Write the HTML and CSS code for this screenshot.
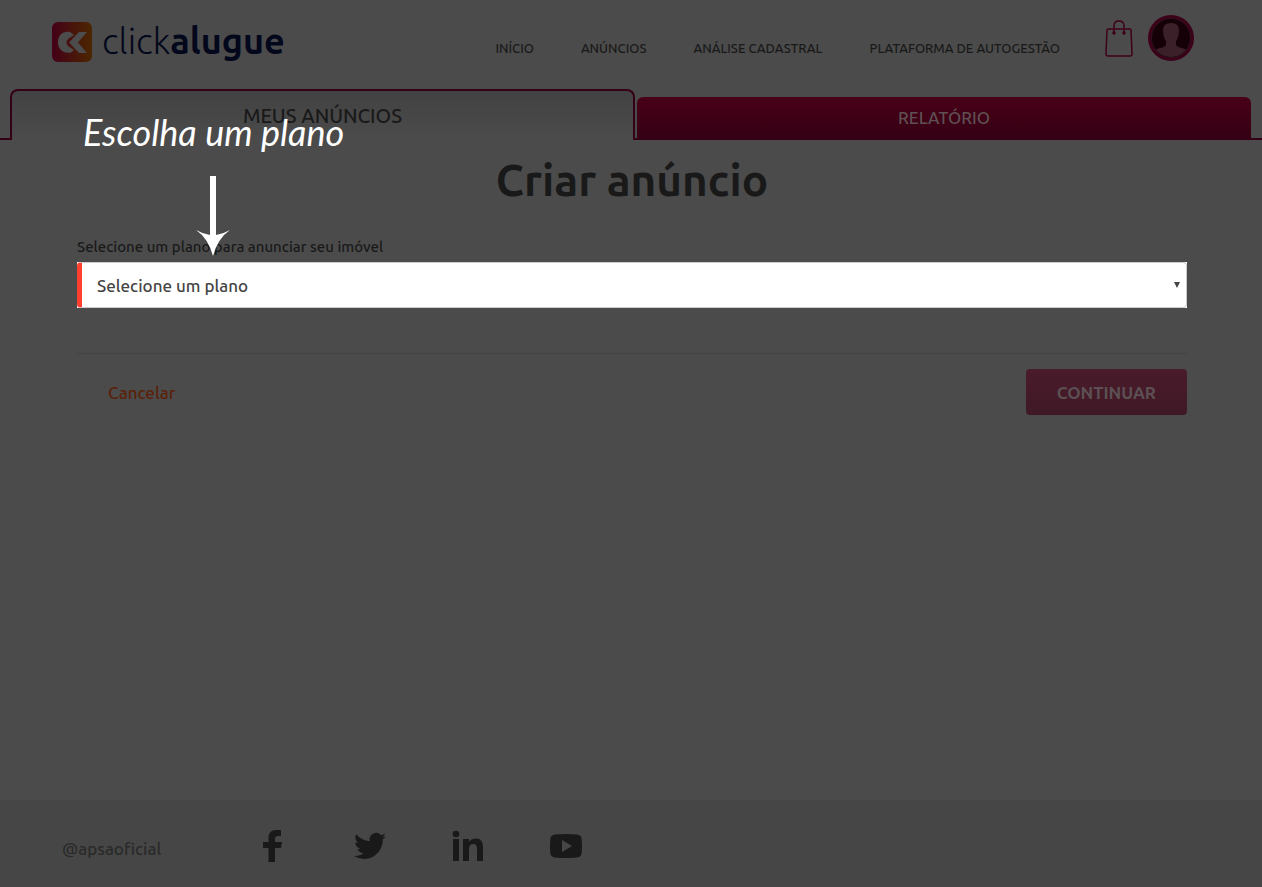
FILE: index.html
```html
<!DOCTYPE html>
<html lang="pt-BR">
<head>
<meta charset="utf-8">
<meta name="viewport" content="width=device-width, initial-scale=1">
<title>Criar anúncio - clickalugue</title>
<link rel="stylesheet" href="styles.css">
</head>
<body>
<header class="header">
  <a class="brand" href="#">
    <svg class="brand-mark" viewBox="0 0 40 40" aria-hidden="true">
      <defs><linearGradient id="mark" x1="0" x2="1" y1="0" y2="0"><stop offset="0" stop-color="#440018"/><stop offset="1" stop-color="#4c2600"/></linearGradient></defs>
      <rect width="40" height="40" rx="6" fill="url(#mark)"/>
      <path d="M18 10C10 9 6 14 6 20.500S11 32 19 30.500L22 28L16 24Q13 20.500 16 17L22 13Z" fill="#4c4c4c"/>
      <path d="M27 10H35L26 20.500L35 31H27L17 20.500Z" fill="#4c4c4c"/>
    </svg>
    <span class="brand-name">click<strong>alugue</strong></span>
  </a>
  <nav class="nav">
    <a href="#">INÍCIO</a>
    <a href="#">ANÚNCIOS</a>
    <a href="#">ANÁLISE CADASTRAL</a>
    <a href="#">PLATAFORMA DE AUTOGESTÃO</a>
  </nav>
  <div class="account">
    <button class="icon-button" type="button" aria-label="Sacola">
      <svg width="28" height="38" viewBox="0 0 28 38" fill="none" stroke="#3f001a" stroke-width="1.500">
        <path d="M3 10H25Q26 10 26 11L27 35Q27 37 25 37H3Q1 37 1 35L2 11Q2 10 3 10Z"/>
        <path d="M9 14V7Q9 2 14 2T19 7V14"/>
        <circle cx="9" cy="14" r="1" fill="#3f001a"/><circle cx="19" cy="14" r="1" fill="#3f001a"/>
      </svg>
    </button>
    <button class="icon-button" type="button" aria-label="Minha conta">
      <svg width="46" height="46" viewBox="0 0 46 46">
        <defs><clipPath id="face"><circle cx="23" cy="23" r="19"/></clipPath></defs>
        <circle cx="23" cy="23" r="21.500" fill="#2a1019" stroke="#3d0019" stroke-width="3"/>
        <circle cx="23" cy="23" r="19" fill="#160007"/>
        <path clip-path="url(#face)" d="M15 15Q15 8 23 8T31 15Q31 22 28 26V30Q29 32 34 33Q40 35 42 38V46H4V38Q6 35 12 33Q17 32 18 30V26Q15 22 15 15Z" fill="#3b2029"/>
      </svg>
    </button>
  </div>
</header>

<div class="tabs" role="tablist">
  <span class="tabs-edge"></span>
  <button class="tab tab-active" type="button" role="tab" aria-selected="true">MEUS ANÚNCIOS</button>
  <div class="tab-slot"><button class="tab" type="button" role="tab" aria-selected="false">RELATÓRIO</button></div>
  <span class="tabs-edge"></span>
</div>

<main class="main">
  <h1 class="title">Criar anúncio</h1>
  <form class="form">
    <label class="label" for="plan">Selecione um plano para anunciar seu imóvel</label>
    <div class="select-wrap">
      <select class="select" id="plan"><option>Selecione um plano</option></select>
      <svg class="caret" width="6" height="6" viewBox="0 0 6 6" aria-hidden="true"><path d="M0 0H6L3 6Z" fill="#444"/></svg>
      <div class="hint">
        <span class="hint-text">Escolha um plano</span>
        <svg class="hint-arrow" width="34" height="80" viewBox="0 0 34 80" aria-hidden="true"><path d="M14 0H20V59Q27 58 34 54Q22 62 17 80Q12 62 0 54Q7 58 14 59Z" fill="#fff"/></svg>
      </div>
    </div>
    <div class="actions">
      <a class="cancel" href="#">Cancelar</a>
      <button class="continue" type="button">CONTINUAR</button>
    </div>
  </form>
</main>

<footer class="footer">
  <span class="handle">@apsaoficial</span>
  <a href="#" aria-label="Facebook"><svg width="32" height="32" viewBox="0 0 32 32"><path d="M19 32V18H25L26 12H19V8.500Q19 6 22 6H25V0H20Q12.500 0 12.500 8V12H7V18H12.500V32Z"/></svg></a>
  <a href="#" aria-label="Twitter"><svg width="32" height="32" viewBox="0 0 24 24"><path d="M24 4.600a10 10 0 0 1-2.800.8 5 5 0 0 0 2.200-2.700 10 10 0 0 1-3.100 1.200 4.900 4.900 0 0 0-8.400 4.500A14 14 0 0 1 1.700 3.200a4.900 4.900 0 0 0 1.500 6.500 5 5 0 0 1-2.200-.6v.1a4.900 4.900 0 0 0 3.900 4.800 5 5 0 0 1-2.200.1 4.900 4.900 0 0 0 4.600 3.400A9.900 9.900 0 0 1 0 19.500a14 14 0 0 0 7.500 2.200c9.100 0 14-7.500 14-14v-.6A10 10 0 0 0 24 4.600Z"/></svg></a>
  <a href="#" aria-label="LinkedIn"><svg width="32" height="32" viewBox="0 0 32 32"><circle cx="4" cy="4" r="3.300"/><path d="M1 9H7V31H1ZM11 9H17V12Q19 8.500 24 8.500Q31 8.500 31 17V31H25V19Q25 14 21.500 14Q17 14 17 19V31H11Z"/></svg></a>
  <a href="#" aria-label="YouTube"><svg width="32" height="32" viewBox="0 0 32 32"><path fill-rule="evenodd" d="M5 4.500Q16 3.500 27 4.500Q31 5 31.500 8Q32.500 16 31.500 24Q31 27 27 27.500Q16 28.500 5 27.500Q1 27 .5 24Q-.5 16 .5 8Q1 5 5 4.500ZM12 10V22L22 16Z"/></svg></a>
</footer>
</body>
</html>
```
FILE: styles.css
```css
* { box-sizing: border-box; }

body {
  margin: 0;
  min-height: 100vh;
  display: flex;
  flex-direction: column;
  background: #4b4b4b;
  color: #191919;
  font-family: Ubuntu, "Noto Sans", "Open Sans", sans-serif;
  font-weight: 500;
}

a { color: inherit; text-decoration: none; }
button, select { font: inherit; }
svg { display: block; }

.header {
  display: flex;
  align-items: flex-start;
  height: 89px;
  padding: 0 68px 0 52px;
}

.brand {
  display: flex;
  gap: 10px;
  margin-top: 22px;
  color: #03071c;
}
.brand-mark { width: 40px; height: 40px; }
.brand-name { font-size: 36px; line-height: 38px; font-weight: 300; }
.brand-name strong { font-weight: 700; }

.nav {
  display: flex;
  gap: 47px;
  margin: 38px 45px 0 auto;
  font-size: 13px;
  line-height: 20px;
}

.account { display: flex; gap: 15px; margin-top: 15px; }
.icon-button { padding: 0; border: 0; background: none; align-self: center; }

.tabs {
  display: grid;
  grid-template-columns: 10px 625fr 616fr 11px;
  height: 51px;
}
.tabs-edge { border-bottom: 2px solid #350016; }
.tab-slot {
  display: flex;
  padding: 8px 0 0 2px;
  border-bottom: 2px solid #350016;
}
.tab {
  flex: 1;
  padding: 0;
  border: 0;
  border-radius: 6px 6px 0 0;
  background: linear-gradient(#480017, #350014);
  color: #5f5054;
  font-size: 17px;
}
.tab-active {
  border: 2px solid #350016;
  border-bottom: 0;
  border-radius: 8px 8px 0 0;
  background: linear-gradient(#424242, #4b4b4b);
  color: #191919;
  font-size: 20px;
}

.main { flex: 1; padding: 12px 75px 0 77px; }
.title {
  margin: 0;
  text-align: center;
  font-size: 44px;
  line-height: 56px;
  font-weight: 600;
}
.form { margin-top: 28px; }
.label { display: block; font-size: 15px; line-height: 22px; }

.select-wrap { position: relative; margin-top: 4px; background: #fff; }
.select {
  display: block;
  appearance: none;
  width: 100%;
  height: 46px;
  padding: 0 20px 0 15px;
  border: 1px solid #ccc;
  border-left: 5px solid #ff4030;
  border-radius: 4px;
  background: #fff;
  color: #444;
  font-size: 17px;
}
.caret { position: absolute; right: 7px; top: 20px; pointer-events: none; }

.hint {
  position: absolute;
  left: 6px;
  bottom: 52px;
  color: #fff;
  pointer-events: none;
}
.hint-text {
  display: block;
  font-family: "Segoe Print", Lato, sans-serif;
  font-style: italic;
  font-size: 36px;
  line-height: 40px;
  font-weight: 400;
}
.hint-arrow { margin: 24px 0 0 113px; }

.actions {
  display: flex;
  justify-content: space-between;
  align-items: center;
  margin-top: 45px;
  padding-top: 15px;
  border-top: 1px solid #434343;
}
.cancel { padding-left: 31px; color: #5a2008; font-size: 17px; }
.continue {
  height: 46px;
  padding: 0 31px;
  border: 0;
  border-radius: 4px;
  background: linear-gradient(#4a1b2a, #3f1826);
  color: #5c5054;
  font-size: 17px;
  font-weight: 600;
}

.footer {
  display: flex;
  align-items: center;
  gap: 66px;
  height: 87px;
  padding: 5px 62px 0;
  background: #464646;
  fill: #191919;
}
.handle { min-width: 128px; padding-top: 4px; color: #2a2a2a; font-size: 17px; }
```
